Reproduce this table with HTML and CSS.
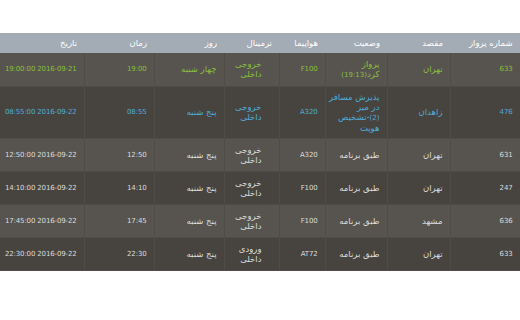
FILE: index.html
```html
<!DOCTYPE html>
<html lang="fa">
<head>
<meta charset="utf-8">
<title>پروازها</title>
<link rel="stylesheet" href="styles.css">
</head>
<body>
<table class="flights" dir="rtl">
  <thead>
    <tr>
      <th class="c-num">شماره پرواز</th>
      <th class="c-dest">مقصد</th>
      <th class="c-status">وضعیت</th>
      <th class="c-plane">هواپیما</th>
      <th class="c-term">ترمینال</th>
      <th class="c-day">روز</th>
      <th class="c-time">زمان</th>
      <th class="c-date">تاریخ</th>
    </tr>
  </thead>
  <tbody>
    <tr class="odd green">
      <td>633</td><td>تهران</td><td class="st" dir="ltr">پرواز کرد<span class="en">(19:13)</span></td><td>F100</td><td class="term">خروجی داخلی</td><td>چهار شنبه</td><td>19:00</td><td>2016-09-21 19:00:00</td>
    </tr>
    <tr class="even blue">
      <td>476</td><td>زاهدان</td><td class="st" dir="ltr">پذیرش مسافر در میز <span class="nw"><span class="en">(2)</span>-تشخیص</span> هویت</td><td>A320</td><td class="term">خروجی داخلی</td><td>پنج شنبه</td><td>08:55</td><td>2016-09-22 08:55:00</td>
    </tr>
    <tr class="odd">
      <td>631</td><td>تهران</td><td class="st">طبق برنامه</td><td>A320</td><td class="term">خروجی داخلی</td><td>پنج شنبه</td><td>12:50</td><td>2016-09-22 12:50:00</td>
    </tr>
    <tr class="even">
      <td>247</td><td>تهران</td><td class="st">طبق برنامه</td><td>F100</td><td class="term">خروجی داخلی</td><td>پنج شنبه</td><td>14:10</td><td>2016-09-22 14:10:00</td>
    </tr>
    <tr class="odd">
      <td>636</td><td>مشهد</td><td class="st">طبق برنامه</td><td>F100</td><td class="term">خروجی داخلی</td><td>پنج شنبه</td><td>17:45</td><td>2016-09-22 17:45:00</td>
    </tr>
    <tr class="even">
      <td>633</td><td>تهران</td><td class="st">طبق برنامه</td><td>AT72</td><td class="term">ورودی داخلی</td><td>پنج شنبه</td><td>22:30</td><td>2016-09-22 22:30:00</td>
    </tr>
  </tbody>
</table>
</body>
</html>
```

FILE: styles.css
```css
html, body {
  margin: 0;
  padding: 0;
  background: #ffffff;
}

body {
  padding-top: 33px;
}

.flights {
  width: 520px;
  table-layout: fixed;
  border-collapse: collapse;
  font-family: "DejaVu Sans", sans-serif;
  font-size: 8.5px;
  line-height: 10px;
  color: #dcdcdc;
  border-right: 1px solid #6c6964;
}

.flights th,
.flights td {
  box-sizing: border-box;
}

.flights th {
  background: #a3abb4;
  color: #ffffff;
  font-weight: normal;
  text-align: right;
  padding: 5px 7px;
  height: 20px;
  line-height: 10px;
}

.c-num { width: 70px; }
.c-dest { width: 63px; }
.c-status { width: 62px; }
.c-plane { width: 46px; }
.c-term { width: 55px; }
.c-day { width: 70px; }
.c-time { width: 70px; }
.c-date { width: 84px; }

.flights td {
  text-align: right;
  vertical-align: middle;
  padding: 5px 7px;
  height: 33px;
  border: 1px solid #4f4c47;
  border-top: 0;
}

.flights td:nth-child(1),
.flights td:nth-child(4),
.flights td:nth-child(7),
.flights td:nth-child(8),
.flights .en {
  font-size: 7px;
  letter-spacing: -0.15px;
  white-space: nowrap;
}

.flights td.st {
  padding-left: 1px;
  padding-right: 7px;
  text-align: right;
}

.flights .nw {
  white-space: nowrap;
}

.flights td.term {
  padding-right: 17px;
}

.flights tr td:first-child {
  border-right: 0;
}

.flights tr td:last-child {
  border-left: 0;
}

.odd td {
  background: #57544f;
}

.even td {
  background: #47443f;
}

.green td {
  color: #8bbf3c;
}

.blue td {
  color: #4eadd8;
}
```
